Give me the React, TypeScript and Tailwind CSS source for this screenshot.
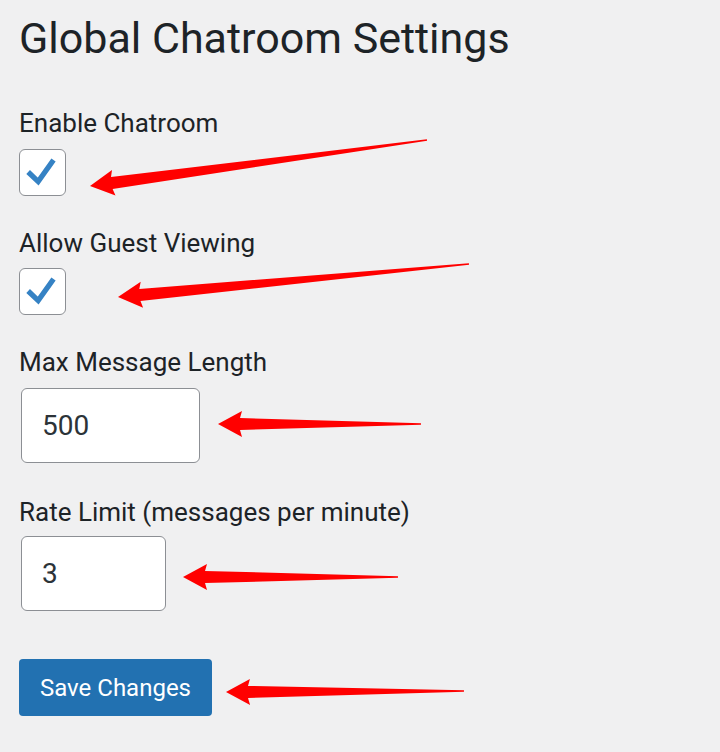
import type { ReactNode } from "react";

type Pt = [number, number];

// red annotation arrows drawn over the form: tip -> tail
const ARROWS: [Pt, Pt][] = [
  [[90, 186], [427, 140]],
  [[118, 297], [469, 264]],
  [[218, 424], [421, 424]],
  [[183, 577], [398, 577]],
  [[226, 692], [464, 691]],
];

function arrowPoints(tip: Pt, tail: Pt) {
  const dx = tail[0] - tip[0];
  const dy = tail[1] - tip[1];
  const len = Math.hypot(dx, dy);
  const ux = dx / len;
  const uy = dy / len;
  const px = -uy;
  const py = ux;
  const at = (along: number, side: number): Pt => [
    tip[0] + ux * along + px * side,
    tip[1] + uy * along + py * side,
  ];
  const pts: Pt[] = [
    tip,
    at(24, 13),
    at(22, 6),
    at(len, 0.8),
    at(len, -0.8),
    at(22, -6),
    at(24, -13),
  ];
  return pts.map((p) => `${p[0].toFixed(1)},${p[1].toFixed(1)}`).join(" ");
}

function Label({ children, className = "" }: { children: ReactNode; className?: string }) {
  return <div className={`text-[26px] leading-[30px] text-[#1d2327] ${className}`}>{children}</div>;
}

function Checkbox() {
  return (
    <div className="flex h-[47px] w-[47px] items-center justify-center rounded-[6px] border border-[#8c8f94] bg-white">
      <svg width="47" height="47" viewBox="0 0 47 47">
        <polyline
          points="8.5,23 19,33 35,10.5"
          fill="none"
          stroke="#3582c4"
          strokeWidth="5.5"
          strokeLinejoin="miter"
        />
      </svg>
    </div>
  );
}

function NumberInput({ value, className }: { value: string; className: string }) {
  return (
    <div
      className={`ml-[2px] flex h-[75px] items-center rounded-[6px] border border-[#8c8f94] bg-white pl-[20px] text-[28px] text-[#2c3338] ${className}`}
    >
      {value}
    </div>
  );
}

export default function App() {
  return (
    <div
      className="relative h-[752px] w-[720px] overflow-hidden bg-[#f0f0f1] pl-[19px] pt-[13px]"
      style={{ fontFamily: "Roboto, 'Noto Sans', sans-serif" }}
    >
      <h1 className="text-[43px] leading-[50px] font-normal text-[#1d2327]">Global Chatroom Settings</h1>

      <Label className="mt-[45px]">Enable Chatroom</Label>
      <div className="mt-[11px]">
        <Checkbox />
      </div>

      <Label className="mt-[32px]">Allow Guest Viewing</Label>
      <div className="mt-[10px]">
        <Checkbox />
      </div>

      <Label className="mt-[32px]">Max Message Length</Label>
      <NumberInput value="500" className="mt-[11px] w-[179px]" />

      <Label className="mt-[34px]">Rate Limit (messages per minute)</Label>
      <NumberInput value="3" className="mt-[9px] w-[145px]" />

      <button className="mt-[48px] flex h-[57px] w-[193px] items-center justify-center rounded-[4px] bg-[#2271b1] text-[24px] text-white">
        Save Changes
      </button>

      <svg className="pointer-events-none absolute inset-0" width="720" height="752">
        {ARROWS.map(([tip, tail], i) => (
          <polygon key={i} points={arrowPoints(tip, tail)} fill="#ff0000" />
        ))}
      </svg>
    </div>
  );
}
